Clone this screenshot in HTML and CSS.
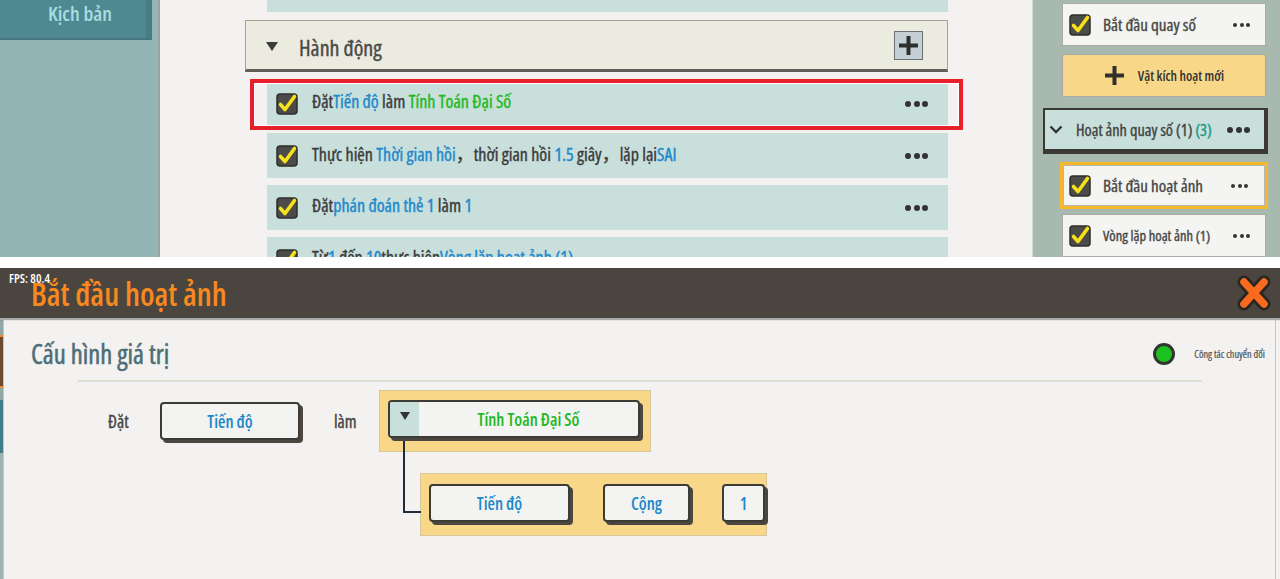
FILE: index.html
```html
<!DOCTYPE html>
<html lang="vi">
<head>
    <meta charset="UTF-8">
    <meta name="viewport" content="width=device-width, initial-scale=1.0">
    <title>Bắt đầu hoạt ảnh</title>
    <link rel="stylesheet" href="styles.css">
</head>
<body>
    <svg class="defs" width="0" height="0">
        <symbol id="check" viewBox="0 0 22 22">
            <rect x="1" y="1" width="20" height="20" rx="3" fill="#4b4b48" stroke="#2e2e2c" stroke-width="1.5"/>
            <path d="M4.5 11.5 L9 16.5 L18.5 3.5" fill="none" stroke="#f7e11b" stroke-width="3.6" stroke-linecap="round" stroke-linejoin="round"/>
        </symbol>
    </svg>

    <div class="editor">
        <aside class="sidebar">
            <div class="tab">Kịch bản</div>
        </aside>

        <main class="actions">
            <div class="row row-partial"></div>

            <div class="section-head">
                <span class="caret"></span>
                <span class="section-title">Hành động</span>
                <button class="add-btn">
                    <svg width="21" height="21" viewBox="0 0 21 21"><path d="M10.5 1 V20 M1 10.5 H20" stroke="#2f2f2d" stroke-width="4"/></svg>
                </button>
            </div>

            <div class="row">
                <svg class="check"><use href="#check"/></svg>
                <span class="row-text">Đặt<span class="blue">Tiến độ</span> làm <span class="green">Tính Toán Đại Số</span></span>
                <span class="dots"><i></i><i></i><i></i></span>
            </div>
            <div class="row">
                <svg class="check"><use href="#check"/></svg>
                <span class="row-text">Thực hiện <span class="blue">Thời gian hồi</span>，thời gian hồi <span class="blue">1.5</span> giây，lặp lại<span class="blue">SAI</span></span>
                <span class="dots"><i></i><i></i><i></i></span>
            </div>
            <div class="row">
                <svg class="check"><use href="#check"/></svg>
                <span class="row-text">Đặt<span class="blue">phán đoán thẻ 1</span> làm <span class="blue">1</span></span>
                <span class="dots"><i></i><i></i><i></i></span>
            </div>
            <div class="row">
                <svg class="check"><use href="#check"/></svg>
                <span class="row-text">Từ<span class="blue">1</span> đến <span class="blue">10</span>thực hiện<span class="blue">Vòng lặp hoạt ảnh (1)</span></span>
                <span class="dots"><i></i><i></i><i></i></span>
            </div>

            <!-- khung đỏ đánh dấu dòng đang xem -->
            <div class="highlight"></div>
        </main>

        <aside class="triggers">
            <div class="card">
                <svg class="check"><use href="#check"/></svg>
                <span class="card-text">Bắt đầu quay số</span>
                <span class="dots dots-sm"><i></i><i></i><i></i></span>
            </div>
            <div class="card card-new">
                <svg width="21" height="21" viewBox="0 0 21 21"><path d="M10.5 1 V20 M1 10.5 H20" stroke="#2f2f2d" stroke-width="4"/></svg>
                <span>Vật kích hoạt mới</span>
            </div>
            <div class="group-head">
                <svg class="chevron" width="14" height="9" viewBox="0 0 14 9"><path d="M1.5 1.5 L7 7 L12.5 1.5" fill="none" stroke="#333" stroke-width="2.4"/></svg>
                <span class="group-text">Hoạt ảnh quay số (1) <span class="teal">(3)</span></span>
                <span class="dots"><i></i><i></i><i></i></span>
            </div>
            <div class="card card-selected">
                <svg class="check"><use href="#check"/></svg>
                <span class="card-text">Bắt đầu hoạt ảnh</span>
                <span class="dots dots-sm"><i></i><i></i><i></i></span>
            </div>
            <div class="card">
                <svg class="check"><use href="#check"/></svg>
                <span class="card-text card-text-sm">Vòng lặp hoạt ảnh (1)</span>
                <span class="dots dots-sm"><i></i><i></i><i></i></span>
            </div>
        </aside>
    </div>

    <div class="dialog">
        <div class="fps">FPS: 80.4</div>
        <div class="dialog-head">
            <h1>Bắt đầu hoạt ảnh</h1>
            <svg class="close" width="36" height="38" viewBox="0 0 36 38">
                <path d="M8 8 L28 30 M28 8 L8 30" stroke="#2a2521" stroke-width="13" stroke-linecap="round"/>
                <path d="M8 8 L28 30 M28 8 L8 30" stroke="#f86b1e" stroke-width="7.5" stroke-linecap="round"/>
            </svg>
        </div>

        <div class="dialog-main">
            <div class="edge"></div>
            <div class="panel">
                <div class="panel-head">
                    <h2>Cấu hình giá trị</h2>
                    <div class="switch">
                        <span class="led"></span>
                        <span class="switch-label">Công tác chuyển đổi</span>
                    </div>
                </div>
                <div class="divider"></div>

                <div class="set-row">
                    <span class="label label-set">Đặt</span>
                    <div class="slot slot-var">Tiến độ</div>
                    <span class="label label-do">làm</span>
                    <div class="expr">
                        <div class="slot slot-calc">
                            <span class="drop"><span class="drop-caret"></span></span>
                            <span class="calc-text">Tính Toán Đại Số</span>
                        </div>
                    </div>
                </div>

                <div class="sub-row">
                    <div class="expr expr-sub">
                        <div class="slot slot-sub-var">Tiến độ</div>
                        <div class="slot slot-op">Cộng</div>
                        <div class="slot slot-num">1</div>
                    </div>
                </div>
            </div>
        </div>
    </div>
</body>
</html>
```

FILE: styles.css
```css
body {
    margin: 0;
    background-color: #ffffff;
    font-family: "Open Sans", "Noto Sans", "Noto Sans CJK SC", sans-serif;
    font-stretch: condensed;
    overflow: hidden;
}
.defs {
    position: absolute;
}
.blue {
    color: #1d88cb;
}
.green {
    color: #22b922;
}
.teal {
    color: #17968a;
}
.check {
    width: 22px;
    height: 22px;
    flex: none;
}
.dots {
    display: flex;
    gap: 2.5px;
    flex: none;
}
.dots i {
    width: 6px;
    height: 6px;
    border-radius: 50%;
    background-color: #333;
}
.dots-sm {
    gap: 2.5px;
}
.dots-sm i {
    width: 4px;
    height: 4px;
}

/* editor phía trên */
.editor {
    display: flex;
    height: 257px;
    overflow: hidden;
    background-color: #f3f2f0;
}
.sidebar {
    width: 158px;
    flex: none;
    background-color: #93b5b5;
    border-right: 2px solid #9ba29e;
}
.tab {
    width: 152px;
    height: 40px;
    box-sizing: border-box;
    padding-left: 14px;
    background-color: #4e8891;
    border-right: 6px solid #497d85;
    border-bottom: 2px solid #45767d;
    color: #a8dde0;
    font-size: 20.5px;
    font-weight: 600;
    line-height: 26px;
    text-align: center;
}
.actions {
    flex: 1;
    position: relative;
}
.row {
    margin-left: 107px;
    margin-bottom: 7px;
    width: 681px;
    height: 45px;
    box-sizing: border-box;
    padding: 0 20px 0 9px;
    background-color: #c8dfdb;
    display: flex;
    align-items: center;
}
.row-partial {
    height: 12px;
    margin-bottom: 8px;
}
.row .check {
    margin-right: 14px;
}
.row-text {
    flex: 1;
    padding-bottom: 5px;
    font-size: 18px;
    color: #3b3b3b;
    -webkit-text-stroke: 0.35px currentColor;
    white-space: nowrap;
}
.section-head {
    margin-left: 85px;
    margin-bottom: 9px;
    width: 703px;
    height: 52px;
    box-sizing: border-box;
    padding: 0 24px 0 20px;
    background-color: #ecebdf;
    border: 1px solid #a4a294;
    border-bottom: 3px solid #5f5e58;
    display: flex;
    align-items: center;
}
.caret {
    width: 0;
    height: 0;
    border-left: 6.5px solid transparent;
    border-right: 6.5px solid transparent;
    border-top: 9px solid #3d3d3b;
    margin: 2px 21px 0 0;
}
.section-title {
    flex: 1;
    padding-top: 3px;
    font-size: 22px;
    color: #4b4b48;
    -webkit-text-stroke: 0.4px currentColor;
}
.add-btn {
    width: 29px;
    height: 29px;
    padding: 0;
    background-color: #c4d0d6;
    border: 1px solid #6d7072;
    display: flex;
    align-items: center;
    justify-content: center;
}
.highlight {
    position: absolute;
    left: 90px;
    top: 79px;
    width: 713px;
    height: 51px;
    box-sizing: border-box;
    border: 4px solid #e8202b;
    box-shadow: inset 0 0 0 1px #ffffff;
}

/* cột vật kích hoạt */
.triggers {
    width: 248px;
    flex: none;
    box-sizing: border-box;
    padding-top: 3px;
    background-color: #a8bab0;
    border-left: 1px solid #d6dad4;
}
.card {
    margin: 0 0 8px 29px;
    width: 204px;
    height: 43px;
    box-sizing: border-box;
    padding: 0 15px 0 6px;
    background-color: #f4f4f2;
    border: 1px solid #a9a9a5;
    display: flex;
    align-items: center;
}
.card .check {
    margin-right: 12px;
}
.card-text {
    flex: 1;
    font-size: 17px;
    color: #474745;
    -webkit-text-stroke: 0.35px currentColor;
    white-space: nowrap;
}
.card-text-sm {
    font-size: 14.5px;
}
.card-new {
    margin-bottom: 11px;
    background-color: #f8d888;
    justify-content: center;
    gap: 13px;
    padding: 0;
    font-size: 13.6px;
    font-weight: 600;
    color: #333;
}
.group-head {
    margin: 0 0 8px 10px;
    width: 225px;
    height: 46px;
    box-sizing: border-box;
    padding: 0 14px 0 4px;
    background-color: #c8dfdb;
    border: 2px solid #3a3934;
    border-right-width: 4px;
    border-bottom-width: 5px;
    display: flex;
    align-items: center;
}
.chevron {
    flex: none;
    margin-right: 13px;
}
.group-text {
    flex: 1;
    font-size: 16.3px;
    color: #434341;
    -webkit-text-stroke: 0.35px currentColor;
    white-space: nowrap;
}
.card-selected {
    margin: 0 0 5px 27px;
    width: 208px;
    height: 47px;
    border: 3px solid #f6b92c;
    box-shadow: inset 0 0 0 1px #b5b5b1;
    padding-right: 17px;
}

/* hộp thoại phía dưới */
.dialog {
    margin-top: 11px;
    height: 311px;
    display: flex;
    flex-direction: column;
    background-color: #f3f2f0;
    position: relative;
}
.fps {
    position: absolute;
    left: 9px;
    top: 2px;
    z-index: 2;
    font-size: 12.5px;
    font-weight: 600;
    color: #ffffff;
}
.dialog-head {
    height: 50px;
    flex: none;
    box-sizing: border-box;
    padding: 0 8px 0 31px;
    background-color: #4b453f;
    box-shadow: 0 2px 1px rgba(0, 0, 0, 0.3);
    display: flex;
    align-items: center;
    justify-content: space-between;
    position: relative;
    z-index: 1;
}
.dialog-head h1 {
    margin: 0;
    font-size: 31.5px;
    font-weight: 600;
    color: #f7891f;
}
.dialog-main {
    flex: 1;
    display: flex;
    padding-top: 2px;
}
.edge {
    width: 3px;
    background: linear-gradient(to bottom,
        #8fa9a7 0, #8fa9a7 15px,
        #f08a2a 15px, #f08a2a 17px,
        #6b4a30 17px, #6b4a30 66px,
        #f08a2a 66px, #f08a2a 68px,
        #8fa9a7 68px, #8fa9a7 80px,
        #3f7e88 80px, #3f7e88 133px,
        #9bb5b3 133px);
}
.panel {
    flex: 1;
    margin-right: 4px;
    border-left: 1px solid #c2c7c4;
    border-right: 1px solid #c6c6c2;
}
.panel-head {
    padding: 20px 10px 0 27px;
    display: flex;
    align-items: center;
    justify-content: space-between;
}
.panel-head h2 {
    margin: 0;
    font-size: 26.7px;
    line-height: 28px;
    font-weight: 400;
    color: #4d6e77;
    -webkit-text-stroke: 0.5px currentColor;
}
.switch {
    display: flex;
    align-items: center;
    gap: 19px;
}
.led {
    width: 16px;
    height: 16px;
    border-radius: 50%;
    background-color: #1ec21e;
    border: 3px solid #343432;
}
.switch-label {
    font-size: 10.3px;
    color: #555;
    -webkit-text-stroke: 0.2px currentColor;
}
.divider {
    margin: 12px 0 0 74px;
    width: 1124px;
    height: 2px;
    background-color: #dbe1d0;
}
.set-row {
    margin: 8px 0 0 104px;
    display: flex;
    align-items: center;
}
.label {
    font-size: 17.5px;
    color: #454543;
    -webkit-text-stroke: 0.35px currentColor;
}
.label-set {
    width: 52px;
}
.label-do {
    width: 45px;
    margin-left: 34px;
}
.slot {
    height: 38px;
    box-sizing: border-box;
    background-color: #f3f3f1;
    border: 2px solid #3c3b36;
    border-radius: 4px;
    box-shadow: 3px 3px 0 #4b4740;
    display: flex;
    align-items: center;
    justify-content: center;
    flex: none;
    font-size: 17px;
    font-weight: 600;
    color: #1d88cb;
}
.slot-var {
    width: 140px;
}
.expr {
    width: 272px;
    height: 62px;
    box-sizing: border-box;
    padding: 9px 0 0 8px;
    background-color: #f8d888;
    border: 1px solid #d9c79a;
    display: flex;
    align-items: flex-start;
}
.slot-calc {
    width: 252px;
    justify-content: flex-start;
    overflow: hidden;
}
.drop {
    width: 29px;
    align-self: stretch;
    background-color: #c8dfdb;
    display: flex;
    justify-content: center;
    padding-top: 10px;
    box-sizing: border-box;
}
.drop-caret {
    width: 0;
    height: 0;
    border-left: 5.5px solid transparent;
    border-right: 5.5px solid transparent;
    border-top: 8px solid #333;
}
.calc-text {
    flex: 1;
    text-align: center;
    color: #22b922;
}
.sub-row {
    margin: 21px 0 0 416px;
}
.expr-sub {
    width: 347px;
    height: 63px;
    padding-top: 10px;
    position: relative;
}
/* đường nối từ ô thả xuống tới biểu thức con */
.expr-sub::before {
    content: "";
    position: absolute;
    left: -18px;
    top: -33px;
    width: 16px;
    height: 70px;
    border-left: 2px solid #1f2d3b;
    border-bottom: 2px solid #1f2d3b;
}
.slot-sub-var {
    width: 141px;
}
.slot-op {
    width: 87px;
    margin-left: 33px;
}
.slot-num {
    width: 43px;
    margin-left: 32px;
}
```
